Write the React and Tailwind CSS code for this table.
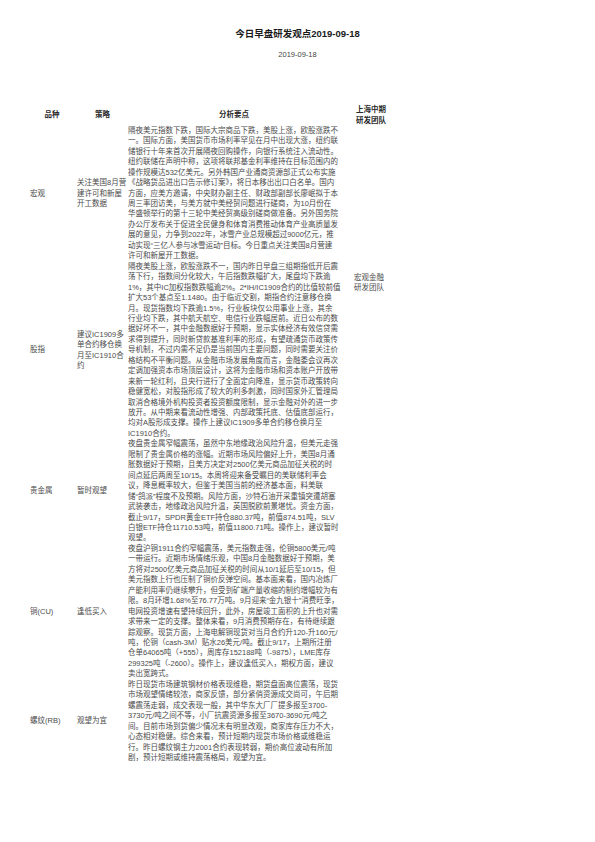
const ROWS = [
  {
    name: "宏观",
    strategy: ["关注美国8月营", "建许可和新屋", "开工数据"],
    team: null,
    lines: [
      "隔夜美元指数下跌，国际大宗商品下跌，美股上涨，欧股涨跌不",
      "一。国际方面，美国货币市场利率罕见在月中出现大涨，纽约联",
      "储银行十年来首次开展隔夜回购操作，向银行系统注入流动性。",
      "纽约联储在声明中称，这项将联邦基金利率维持在目标范围内的",
      "操作规模达532亿美元。另外韩国产业通商资源部正式公布实施",
      "《战略货品进出口告示修订案》，将日本移出出口白名单。国内",
      "方面，应美方邀请，中央财办副主任、财政部副部长廖岷拟于本",
      "周三率团访美，与美方就中美经贸问题进行磋商，为10月份在",
      "华盛顿举行的第十三轮中美经贸高级别磋商做准备。另外国务院",
      "办公厅发布关于促进全民健身和体育消费推动体育产业高质量发",
      "展的意见，力争到2022年，冰雪产业总规模超过9000亿元，推",
      "动实现“三亿人参与冰雪运动”目标。今日重点关注美国8月营建",
      "许可和新屋开工数据。",
    ],
  },
  {
    name: "股指",
    strategy: ["建议IC1909多", "单合约移仓换", "月至IC1910合", "约"],
    team: ["宏观金融", "研发团队"],
    lines: [
      "隔夜美股上涨，欧股涨跌不一，国内昨日早盘三组期指低开后震",
      "荡下行，指数间分化较大，午后指数跌幅扩大，尾盘均下跌逾",
      "1%，其中IC加权指数跌幅逾2%。2*IH/IC1909合约的比值较前值",
      "扩大53个基点至1.1480。由于临近交割，期指合约注意移仓换",
      "月。现货指数均下跌逾1.5%，行业板块仅公用事业上涨，其余",
      "行业均下跌，其中航天航空、电信行业跌幅居前。近日公布的数",
      "据好坏不一，其中金融数据好于预期，显示实体经济有效信贷需",
      "求得到提升，同时新贷款基准利率的形成，有望疏通货币政策传",
      "导机制，不过内需不足仍是当前国内主要问题，同时需要关注价",
      "格结构不平衡问题。从金融市场发展角度而言，金融委会议再次",
      "定调加强资本市场顶层设计，这将为金融市场和资本账户开放带",
      "来新一轮红利，且央行进行了全面定向降准，显示货币政策转向",
      "稳健宽松，对股指形成了较大的利多刺激，同时国家外汇管理局",
      "取消合格境外机构投资者投资额度限制，显示金融对外的进一步",
      "放开。从中期来看流动性增强、内部政策托底、估值底部运行，",
      "均对A股形成支撑。操作上建议IC1909多单合约移仓换月至",
      "IC1910合约。",
    ],
  },
  {
    name: "贵金属",
    strategy: ["暂时观望"],
    team: null,
    lines: [
      "夜盘贵金属窄幅震荡，虽然中东地缘政治风险升温，但美元走强",
      "限制了贵金属价格的涨幅。近期市场风险偏好上升，美国8月通",
      "胀数据好于预期，且美方决定对2500亿美元商品加征关税的时",
      "间点延后两周至10/15。本周将迎来备受瞩目的美联储利率会",
      "议，降息概率较大，但鉴于美国当前的经济基本面，料美联",
      "储“鸽派”程度不及预期。风险方面，沙特石油开采重镇突遭胡塞",
      "武装袭击，地缘政治风险升温，英国脱欧前景堪忧。资金方面，",
      "截止9/17，SPDR黄金ETF持仓880.37吨，前值874.51吨，SLV",
      "白银ETF持仓11710.53吨，前值11800.71吨。操作上，建议暂时",
      "观望。",
    ],
  },
  {
    name: "铜(CU)",
    strategy: ["逢低买入"],
    team: null,
    lines: [
      "夜盘沪铜1911合约窄幅震荡，美元指数走强，伦铜5800美元/吨",
      "一带运行。近期市场情绪乐观，中国8月金融数据好于预期，美",
      "方将对2500亿美元商品加征关税的时间从10/1延后至10/15，但",
      "美元指数上行也压制了铜价反弹空间。基本面来看，国内冶炼厂",
      "产能利用率仍继续攀升，但受到矿端产量收缩的制约增幅较为有",
      "限。8月环增1.68%至76.77万吨。9月迎来“金九银十”消费旺季，",
      "电网投资增速有望持续回升，此外，房屋竣工面积的上升也对需",
      "求带来一定的支撑。整体来看，9月消费预期存在，有待继续跟",
      "踪观察。现货方面，上海电解铜现货对当月合约升120-升160元/",
      "吨，伦铜（cash-3M）贴水26美元/吨。截止9/17，上期所注册",
      "仓单64065吨（+555），周库存152188吨（-9875），LME库存",
      "299325吨（-2600）。操作上，建议逢低买入，期权方面，建议",
      "卖出宽跨式。",
    ],
  },
  {
    name: "螺纹(RB)",
    strategy: ["观望为宜"],
    team: null,
    lines: [
      "昨日现货市场建筑钢材价格表现维稳，期货盘面高位震荡，现货",
      "市场观望情绪较浓，商家反馈，部分紧俏资源成交尚可，午后期",
      "螺震荡走弱，成交表现一般，其中华东大厂厂提多报至3700-",
      "3730元/吨之间不等，小厂抗震资源多报至3670-3690元/吨之",
      "间。目前市场到货偏少情况未有明显改观，商家库存压力不大，",
      "心态相对稳健。综合来看，预计短期内现货市场价格或维稳运",
      "行。昨日螺纹钢主力2001合约表现转弱，期价高位波动有所加",
      "剧，预计短期或维持震荡格局，观望为宜。",
    ],
  },
];

export default function App() {
  return (
    <div className="w-[595px] h-[842px] bg-white font-['Liberation_Sans','Noto_Sans_CJK_SC',sans-serif] text-[#4a4a4a] overflow-hidden">
      {/* Title */}
      <div className="pt-[28px] text-center">
        <div className="text-[9.5px] leading-[12px] font-bold text-[#1a1a1a]">今日早盘研发观点2019-09-18</div>
        <div className="mt-[10px] text-[7.5px] leading-[10px] text-[#444]">2019-09-18</div>
      </div>

      {/* Table header */}
      <div className="mt-[43.8px] flex h-[22px] pl-[30px] text-[7.5px] font-bold text-[#2a2a2a]">
        <div className="w-[44px] flex items-center justify-center">品种</div>
        <div className="ml-[3px] w-[51px] flex items-center justify-center">策略</div>
        <div className="w-[212px] flex items-center justify-center">分析要点</div>
        <div className="ml-[14px] w-[34px] flex flex-col items-center justify-center leading-[11px]">
          <span className="whitespace-nowrap">上海中期</span>
          <span className="whitespace-nowrap">研发团队</span>
        </div>
      </div>

      {/* Table body */}
      <div className="pl-[30px] text-[7.5px] leading-[10.45px]">
        {ROWS.map((row) => (
          <div key={row.name} className="flex">
            <div className="w-[44px] flex items-center whitespace-nowrap">{row.name}</div>
            <div className="ml-[3px] w-[51px] flex flex-col justify-center">
              {row.strategy.map((s, i) => (
                <div key={i} className="whitespace-nowrap">{s}</div>
              ))}
            </div>
            <div className="w-[212px]">
              {row.lines.map((l, i) => (
                <div key={i} className="whitespace-nowrap">{l}</div>
              ))}
            </div>
            <div className="ml-[14px] w-[40px] pt-[11px]">
              {row.team && row.team.map((t, i) => (
                <div key={i} className="whitespace-nowrap">{t}</div>
              ))}
            </div>
          </div>
        ))}
      </div>
    </div>
  );
}
